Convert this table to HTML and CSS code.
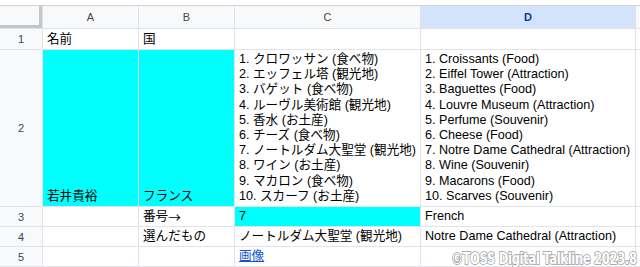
FILE: index.html
```html
<!DOCTYPE html>
<html lang="ja">
<head>
<meta charset="utf-8">
<link rel="stylesheet" href="styles.css">
</head>
<body>
<div class="top"></div>
<div class="sheet">
  <div class="corner"></div>
  <div class="ch">A</div>
  <div class="ch">B</div>
  <div class="ch">C</div>
  <div class="ch sel">D</div>
  <div class="ch"></div>

  <div class="rh">1</div>
  <div class="c">名前</div>
  <div class="c">国</div>
  <div class="c"></div>
  <div class="c"></div>
  <div class="c"></div>

  <div class="rh">2</div>
  <div class="c cyan">若井貴裕</div>
  <div class="c cyan">フランス</div>
  <div class="c list">1. クロワッサン (食べ物)
2. エッフェル塔 (観光地)
3. バゲット (食べ物)
4. ルーヴル美術館 (観光地)
5. 香水 (お土産)
6. チーズ (食べ物)
7. ノートルダム大聖堂 (観光地)
8. ワイン (お土産)
9. マカロン (食べ物)
10. スカーフ (お土産)</div>
  <div class="c list">1. Croissants (Food)
2. Eiffel Tower (Attraction)
3. Baguettes (Food)
4. Louvre Museum (Attraction)
5. Perfume (Souvenir)
6. Cheese (Food)
7. Notre Dame Cathedral (Attraction)
8. Wine (Souvenir)
9. Macarons (Food)
10. Scarves (Souvenir)</div>
  <div class="c"></div>

  <div class="rh">3</div>
  <div class="c"></div>
  <div class="c">番号<span class="cjk">→</span></div>
  <div class="c cyan">7</div>
  <div class="c">French</div>
  <div class="c"></div>

  <div class="rh">4</div>
  <div class="c"></div>
  <div class="c">選んだもの</div>
  <div class="c">ノートルダム大聖堂 (観光地)</div>
  <div class="c">Notre Dame Cathedral (Attraction)</div>
  <div class="c"></div>

  <div class="rh">5</div>
  <div class="c"></div>
  <div class="c"></div>
  <div class="c"><a class="link" href="#">画像</a></div>
  <div class="c"></div>
  <div class="c"></div>

  <div class="rh"></div>
  <div class="c"></div>
  <div class="c"></div>
  <div class="c"></div>
  <div class="c"></div>
  <div class="c"></div>

  <div class="mark">©TOSS Digital Talkline 2023.8</div>
</div>
</body>
</html>
```
FILE: styles.css
```css
html, body {
  margin: 0;
  padding: 0;
  background: #fff;
  overflow: hidden;
}
body {
  width: 640px;
  height: 267px;
  font-family: "Liberation Sans", Arial, "Noto Sans CJK JP", sans-serif;
}
.top {
  height: 5px;
  background: #fff;
  border-bottom: 1px solid #d0d3d6;
}
.sheet {
  position: relative;
  display: grid;
  grid-template-columns: 42px 95px 95px 185px 214px 1fr;
  grid-template-rows: 22px 20px 156px 19px 19px 19px 4px;
  gap: 1px;
  background: #e1e3e6;
}
.corner {
  background: #f8f9fa;
  box-shadow: inset -3px -3px 0 #c4c7c5;
}
.ch {
  background: #f8f9fa;
  color: #444746;
  font-size: 11px;
  display: flex;
  align-items: center;
  justify-content: center;
}
.ch.sel {
  background: #d3e3fd;
  color: #0b3a82;
  font-weight: bold;
}
.rh {
  background: #f8f9fa;
  color: #444746;
  font-size: 11px;
  display: flex;
  align-items: center;
  justify-content: center;
}
.c {
  background: #fff;
  color: #000;
  font-size: 12.6px;
  line-height: 15.2px;
  padding: 0 3px 2px 4px;
  display: flex;
  align-items: flex-end;
  white-space: nowrap;
  overflow: visible;
}
.c.cyan {
  background: #00ffff;
}
.c.list {
  white-space: pre;
}
.cjk {
  font-family: "Noto Sans CJK JP", sans-serif;
}
.link {
  color: #1155cc;
  text-decoration: underline;
}
.mark {
  position: absolute;
  right: 3px;
  bottom: 3px;
  font-family: "DejaVu Sans Condensed", "DejaVu Sans", sans-serif;
  font-stretch: condensed;
  font-weight: bold;
  font-size: 15px;
  line-height: 18px;
  letter-spacing: -0.4px;
  color: #fff;
  -webkit-text-stroke: 1.5px #9c9c9c;
  paint-order: stroke fill;
  transform: scaleX(0.86);
  transform-origin: right center;
}
```
